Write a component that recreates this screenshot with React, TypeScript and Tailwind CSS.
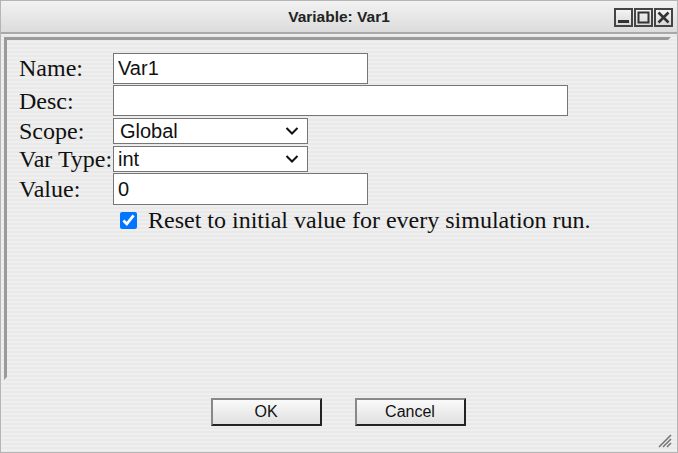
import { useState } from "react"

const sans = "font-['Liberation_Sans',Arial,sans-serif]"
const serif = "font-['Liberation_Serif','Times_New_Roman',serif]"

function WinButton({ kind }: { kind: "min" | "max" | "close" }) {
  return (
    <div className="w-[19px] h-[19px] border-2 border-[#444] bg-gradient-to-b from-[#f4f4f4] to-[#d8d8d8] flex items-center justify-center">
      <svg width="13" height="13" viewBox="0 0 13 13">
        {kind === "min" && <rect x="1" y="9" width="11" height="3" fill="#333" />}
        {kind === "max" && <rect x="1.5" y="1.5" width="10" height="10" fill="none" stroke="#333" strokeWidth="2" />}
        {kind === "close" && (
          <path d="M1.5 1.5 L11.5 11.5 M11.5 1.5 L1.5 11.5" stroke="#333" strokeWidth="2.6" />
        )}
      </svg>
    </div>
  )
}

function Chevron() {
  return (
    <svg width="14" height="9" viewBox="0 0 14 9" className="absolute right-[8px] top-1/2 -translate-y-1/2">
      <path d="M1.5 1.5 L7 7 L12.5 1.5" fill="none" stroke="#111" strokeWidth="2" />
    </svg>
  )
}

export default function App() {
  const [name, setName] = useState("Var1")
  const [desc, setDesc] = useState("")
  const [value, setValue] = useState("0")
  const [reset, setReset] = useState(true)

  const label = `${serif} text-[24px] text-[#111] w-[94px] shrink-0 leading-none`
  const input = `${sans} h-[31px] border border-[#767676] bg-white px-[4px] text-[20px] text-[#111] outline-none`
  const btn = `${sans} w-[111px] h-[28px] border-2 border-t-[#888] border-l-[#888] border-r-[#222] border-b-[#222] bg-gradient-to-b from-[#fafafa] to-[#e0e0e0] text-[16px] text-[#111]`

  return (
    <div className="w-[678px] h-[453px] bg-white">
      <div className="w-full h-full border border-[#b5b5b5] flex flex-col bg-[repeating-linear-gradient(180deg,#efefef_0px,#efefef_2px,#e9e9e9_2px,#e9e9e9_4px)]">
        {/* Title bar */}
        <div className="relative h-[33px] shrink-0 border-b-2 border-[#a8a8a8] bg-gradient-to-b from-[#f2f2f2] to-[#dcdcdc] flex items-center justify-center">
          <span className={`${sans} font-bold text-[15.5px] text-[#222]`}>Variable: Var1</span>
          <div className="absolute right-[4px] top-[7px] flex gap-[1px]">
            <WinButton kind="min" />
            <WinButton kind="max" />
            <WinButton kind="close" />
          </div>
        </div>

        {/* Body */}
        <div className="relative flex-1 flex flex-col">
          <div className="mt-[3px] ml-[3px] mr-[6px] h-[343px] border-[3px] border-t-[#9a9a9a] border-l-[#9a9a9a] border-r-transparent border-b-transparent pl-[12px] pt-[12px]">
            <div className="flex flex-col">
              <div className="flex items-center h-[32px]">
                <span className={label}>Name:</span>
                <input className={`${input} w-[255px]`} value={name} onChange={(e) => setName(e.target.value)} />
              </div>
              <div className="flex items-center h-[33px]">
                <span className={label}>Desc:</span>
                <input className={`${input} w-[455px]`} value={desc} onChange={(e) => setDesc(e.target.value)} />
              </div>
              <div className="flex items-center h-[28px]">
                <span className={label}>Scope:</span>
                <div className={`${sans} relative w-[195px] h-[26px] border border-[#767676] bg-white px-[6px] text-[20px] text-[#111] flex items-center`}>
                  Global
                  <Chevron />
                </div>
              </div>
              <div className="flex items-center h-[28px]">
                <span className={label}>Var Type:</span>
                <div className={`${sans} relative w-[195px] h-[26px] border border-[#767676] bg-white px-[4px] text-[20px] text-[#111] flex items-center`}>
                  int
                  <Chevron />
                </div>
              </div>
              <div className="flex items-center h-[32px]">
                <span className={label}>Value:</span>
                <input className={`${input} w-[255px] h-[32px]`} value={value} onChange={(e) => setValue(e.target.value)} />
              </div>
              <label className="flex items-center gap-[11px] mt-[5px] ml-[101px] h-[20px] cursor-pointer">
                <input
                  type="checkbox"
                  checked={reset}
                  onChange={(e) => setReset(e.target.checked)}
                  className="w-[17px] h-[17px] m-0 accent-[#0075ff]"
                />
                <span className={`${serif} text-[24px] text-[#111] leading-none`}>
                  Reset to initial value for every simulation run.
                </span>
              </label>
            </div>
          </div>

          {/* Buttons */}
          <div className="flex justify-center gap-[33px] mt-[18px] pr-[2px]">
            <button className={btn}>OK</button>
            <button className={btn}>Cancel</button>
          </div>

          {/* Resize grip */}
          <svg width="16" height="16" viewBox="0 0 16 16" className="absolute right-[5px] bottom-[4px]">
            <path d="M15 3 L3 15 M15 7 L7 15 M15 11 L11 15" stroke="#777" strokeWidth="1.6" />
          </svg>
        </div>
      </div>
    </div>
  )
}
